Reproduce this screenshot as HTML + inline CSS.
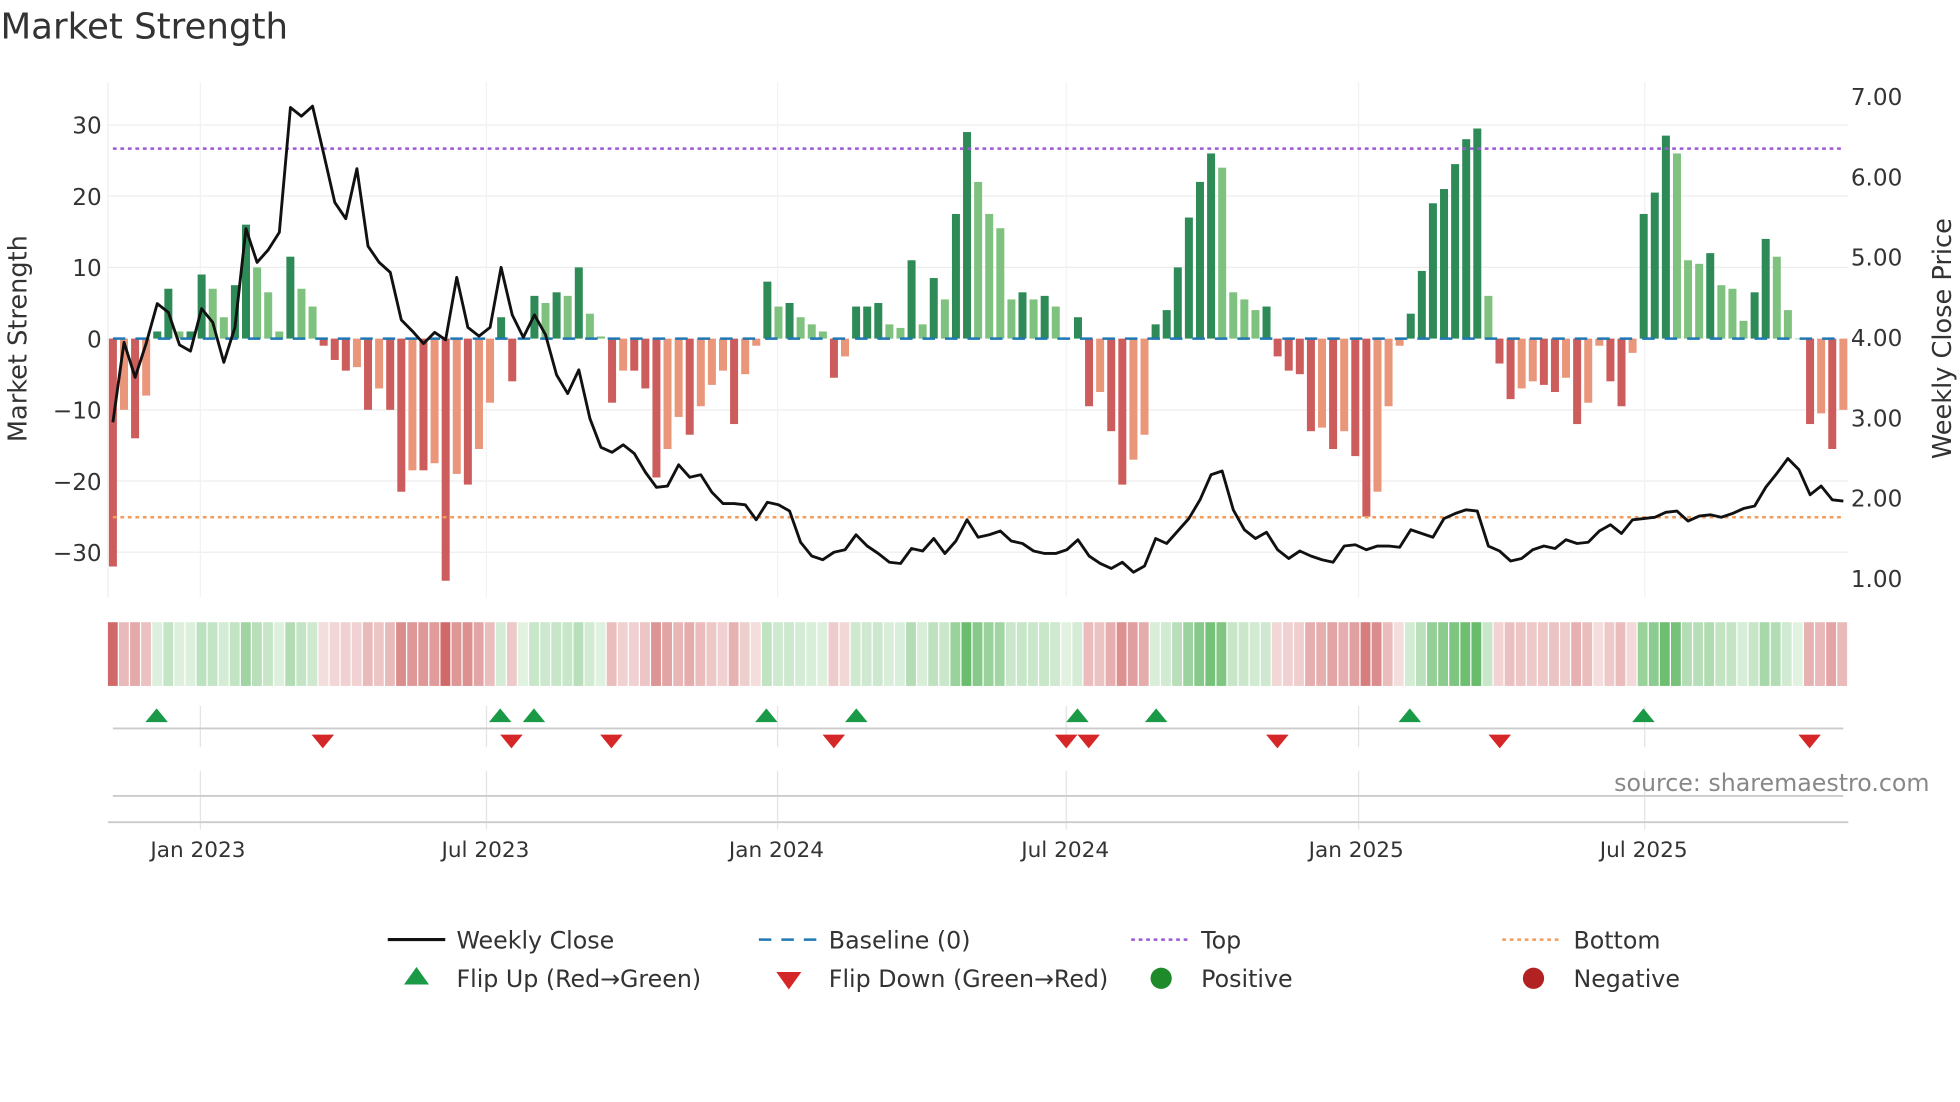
<!DOCTYPE html>
<html><head><meta charset="utf-8"><style>
html,body{margin:0;padding:0;background:#fff;}
svg{display:block;font-family:"DejaVu Sans","Liberation Sans",sans-serif;}
</style></head><body>
<svg id="s" width="1960" height="1102" viewBox="0 0 1568 882" xmlns="http://www.w3.org/2000/svg">
<text x="0" y="31" font-size="28.5" fill="#333">Market Strength</text>
<g id="grid"></g>
<g id="bars"></g>
<g id="heat"></g>
<g id="marks"></g>
<text transform="translate(21,271) rotate(-90)" text-anchor="middle" font-size="20.5" fill="#333">Market Strength</text>
<text transform="translate(1561,271) rotate(-90)" text-anchor="middle" font-size="20.5" fill="#333">Weekly Close Price</text>
<text x="1544" y="633" text-anchor="end" font-size="19" fill="#888">source: sharemaestro.com</text>
<g font-size="17.3" fill="#333">
<text x="120" y="686">Jan 2023</text><text x="353" y="686">Jul 2023</text><text x="583" y="686">Jan 2024</text>
<text x="817" y="686">Jul 2024</text><text x="1047" y="686">Jan 2025</text><text x="1280" y="686">Jul 2025</text>
</g>
<g font-size="19" fill="#333">
<line x1="310" y1="752" x2="356" y2="752" stroke="#111" stroke-width="2.5"/><text x="365" y="759">Weekly Close</text>
<line x1="607" y1="752" x2="653" y2="752" stroke="#1f77b4" stroke-width="2" stroke-dasharray="10,8"/><text x="663" y="759">Baseline (0)</text>
<line x1="905" y1="752" x2="951" y2="752" stroke="#9b59d8" stroke-width="2" stroke-dasharray="3,3"/><text x="961" y="759">Top</text>
<line x1="1202" y1="752" x2="1248" y2="752" stroke="#f39c5a" stroke-width="2" stroke-dasharray="3,3"/><text x="1259" y="759">Bottom</text>
<polygon points="323,788 343,788 333,774" fill="#1a9a46"/><text x="365" y="790">Flip Up (Red→Green)</text>
<polygon points="621,778 641,778 631,792" fill="#d62728"/><text x="663" y="790">Flip Down (Green→Red)</text>
<circle cx="929" cy="783" r="8.5" fill="#1f8a2a"/><text x="961" y="790">Positive</text>
<circle cx="1227" cy="783" r="8.5" fill="#b22222"/><text x="1259" y="790">Negative</text>
</g>
</svg>
<script>
const NS="http://www.w3.org/2000/svg";
function el(p,t,a){const e=document.createElementNS(NS,t);for(const k in a)e.setAttribute(k,a[k]);document.getElementById(p).appendChild(e);return e;}
const v=[-32,-10,-14,-8,1,7,1,1,9,7,3,7.5,16,10,6.5,1,11.5,7,4.5,-1,-3,-4.5,-4,-10,-7,-10,-21.5,-18.5,-18.5,-17.5,-34,-19,-20.5,-15.5,-9,3,-6,0,6,5,6.5,6,10,3.5,0.3,-9,-4.5,-4.5,-7,-19.5,-15.5,-11,-13.5,-9.5,-6.5,-4.5,-12,-5,-1,8,4.5,5,3,2,1,-5.5,-2.5,4.5,4.5,5,2,1.5,11,2,8.5,5.5,17.5,29,22,17.5,15.5,5.5,6.5,5.5,6,4.5,0,3,-9.5,-7.5,-13,-20.5,-17,-13.5,2,4,10,17,22,26,24,6.5,5.5,4,4.5,-2.5,-4.5,-5,-13,-12.5,-15.5,-13,-16.5,-25,-21.5,-9.5,-1,3.5,9.5,19,21,24.5,28,29.5,6,-3.5,-8.5,-7,-6,-6.5,-7.5,-5.5,-12,-9,-1,-6,-9.5,-2,17.5,20.5,28.5,26,11,10.5,12,7.5,7,2.5,6.5,14,11.5,4,0,-12,-10.5,-15.5,-10];
const n=v.length,x0=90,dx=(1475-90)/(n-1),y0=271,k=5.7;
[30,20,10,-10,-20,-30].forEach(t=>el("grid","line",{x1:86,x2:1479,y1:y0-t*k,y2:y0-t*k,stroke:"#eee","stroke-width":1}));
[160,389,622,853,1087,1316].forEach(x=>{el("grid","line",{x1:x,x2:x,y1:66,y2:478,stroke:"#f2f2f2"});el("grid","line",{x1:x,x2:x,y1:565,y2:598,stroke:"#e4e4e4"});el("grid","line",{x1:x,x2:x,y1:617,y2:664,stroke:"#e4e4e4"});});
el("grid","line",{x1:86,x2:86,y1:66,y2:478,stroke:"#eee"});
[[30,"30"],[20,"20"],[10,"10"],[0,"0"],[-10,"−10"],[-20,"−20"],[-30,"−30"]].forEach(([t,s])=>{const tx=el("grid","text",{x:81,y:y0-t*k+7,"text-anchor":"end","font-size":18.5,fill:"#333"});tx.textContent=s;});
["7.00","6.00","5.00","4.00","3.00","2.00","1.00"].forEach((s,i)=>{const tx=el("grid","text",{x:1481,y:84+i*64.3,"font-size":18.5,fill:"#333"});tx.textContent=s;});
el("grid","line",{x1:90,x2:1475,y1:583,y2:583,stroke:"#ccc","stroke-width":1.5});
el("grid","line",{x1:90,x2:1475,y1:637,y2:637,stroke:"#ccc","stroke-width":1.5});
el("grid","line",{x1:86,x2:1479,y1:658,y2:658,stroke:"#ccc","stroke-width":1.5});
for(let i=0;i<n;i++){const val=v[i],p=i?v[i-1]:0,x=x0+i*dx;let c;
 if(val>=0)c=(val>=p)?"#2e8b57":"#7fc27f";else c=(val<=p)?"#cd5c5c":"#e9967a";
 const h=Math.abs(val)*k;el("bars","rect",{x:x-3.2,y:val>=0?y0-h:y0,width:6.4,height:Math.max(h,0.5),fill:c});
 const a=Math.min(1,0.2+Math.abs(val)/30*0.8);
 el("heat","rect",{x:86+i*(1393/n),y:498,width:1393/n-1,height:51,fill:val>=0?"rgb(76,175,80)":"rgb(200,80,80)","fill-opacity":a*0.85});
}
el("bars","line",{x1:90,x2:1475,y1:y0,y2:y0,stroke:"#1f77b4","stroke-width":2,"stroke-dasharray":"10,8"});
el("bars","line",{x1:90,x2:1475,y1:119,y2:119,stroke:"#9b59d8","stroke-width":2,"stroke-dasharray":"3,3"});
el("bars","line",{x1:90,x2:1475,y1:414,y2:414,stroke:"#f39c5a","stroke-width":2,"stroke-dasharray":"3,3"});
const py=[338,274,302,275,243,250,276,281,247,258,290,262,183,210,200,186,86,93,85,123,162,175,135,197,210,218,256,265,275,266,272,222,262,269,262,214,252,270,252,268,300,315,296,335,358,362,356,363,378,390,389,372,382,380,394,403,403,404,416,402,404,409,434,445,448,442,440,428,437,443,450,451,439,441,431,443,433,416,430,428,425,433,435,441,443,443,440,432,445,451,455,450,458,453,431,435,425,415,400,380,377,408,424,431,426,440,447,441,445,448,450,437,436,440,437,437,438,424,427,430,415,411,408,409,437,441,449,447,440,437,439,432,435,434,425,420,427,416,415,414,410,409,417,413,412,414,411,407,405,390,379,367,376,396,389,400,401];
el("bars","polyline",{points:py.map((y,i)=>(x0+i*dx).toFixed(1)+","+y).join(" "),fill:"none",stroke:"#111","stroke-width":2.3,"stroke-linejoin":"round"});
[125,400,427,613,685,862,925,1128,1315].forEach(x=>el("marks","polygon",{points:`${x-9},578 ${x+9},578 ${x},567`,fill:"#1a9a46"}));
[258,409,489,667,853,871,1022,1200,1448].forEach(x=>el("marks","polygon",{points:`${x-9},588 ${x+9},588 ${x},599`,fill:"#d62728"}));
</script>
</body></html>
